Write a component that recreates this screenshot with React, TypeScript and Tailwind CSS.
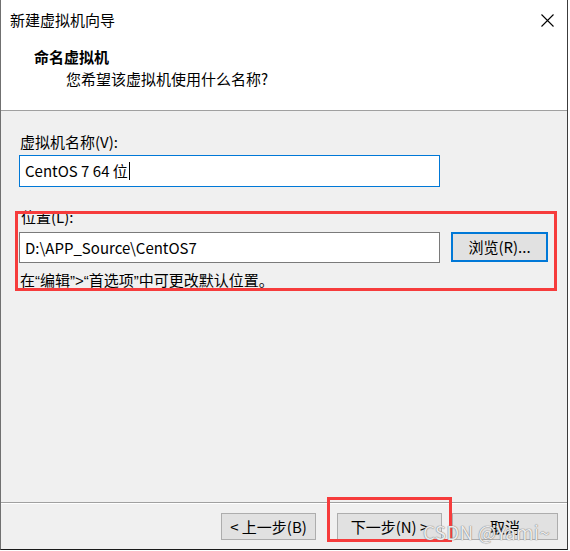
import React from 'react';

const font = "font-['Noto_Sans_CJK_SC','Noto_Sans',sans-serif]";

const WinButton = ({ label, className = '' }: { label: string; className?: string }) => (
    <div
        className={`h-[27px] flex items-center justify-center bg-[#e1e1e1] border border-[#adadad] text-[15px] leading-[20px] text-black ${className}`}
    >
        {label}
    </div>
);

// narrow western quotes as Windows renders them
const Q = ({ children }: { children: React.ReactNode }) => (
    <span className="font-['Liberation_Sans',sans-serif]">{children}</span>
);

export default function App() {
    return (
        <div className={`relative w-[570px] h-[551px] bg-white overflow-hidden ${font}`}>
            <div className="w-[568px] h-[550px] flex flex-col border-l border-r border-b border-l-[#707070] border-r-[#3c3c3c] border-b-[#1a1a1a]">
                {/* Header */}
                <div className="h-[111px] bg-white border-b border-[#a0a0a0] shrink-0">
                    <div className="flex items-center justify-between pt-[10px] pl-[9px] pr-[13px] h-[30px]">
                        <span className="text-[15px] leading-[20px] text-black">新建虚拟机向导</span>
                        <svg width="13" height="13" viewBox="0 0 13 13" className="text-black">
                            <path d="M0.5 0.5 L12.5 12.5 M12.5 0.5 L0.5 12.5" stroke="currentColor" strokeWidth="1.1" />
                        </svg>
                    </div>
                    <div className="mt-[17px] pl-[33px] text-[15px] leading-[20px] font-bold text-black">命名虚拟机</div>
                    <div className="mt-[2px] pl-[65px] text-[15px] leading-[20px] text-black">您希望该虚拟机使用什么名称?</div>
                </div>

                {/* Body */}
                <div className="h-[391px] bg-[#f0f0f0] pl-[18px] pt-[21px] shrink-0">
                    <div className="pl-[1px] text-[15px] leading-[20px] text-black">虚拟机名称(V):</div>
                    <div className="mt-[3px] w-[421px] h-[32px] bg-white border border-[#0078d7] flex items-center pl-[5px] text-[15px] text-black">
                        <span className="leading-[20px]">CentOS 7 64 位</span>
                        <span className="w-px h-[18px] bg-black ml-[1px]" />
                    </div>

                    <div className="mt-[20px] pl-[2px] text-[15px] leading-[20px] text-black">位置(L):</div>
                    <div className="mt-[5px] flex items-start">
                        <div className="w-[421px] h-[31px] bg-white border border-[#7a7a7a] flex items-center pl-[5px] text-[15px] leading-[20px] text-black">
                            D:\APP_Source\CentOS7
                        </div>
                        <div className="ml-[11px] w-[97px] h-[30px] bg-[#e1e1e1] border-2 border-[#0078d7] flex items-center justify-center text-[15px] leading-[20px] text-black">
                            浏览(R)...
                        </div>
                    </div>
                    <div className="mt-[7px] pl-[1px] text-[15px] leading-[20px] text-black">
                        在<Q>“</Q>编辑<Q>”&gt;“</Q>首选项<Q>”</Q>中可更改默认位置。
                    </div>
                </div>

                {/* Footer */}
                <div className="flex-1 bg-[#f0f0f0] border-t border-[#a0a0a0]">
                    <div className="h-full border-t border-white flex justify-end items-start pt-[9px] pr-[9px]">
                        <WinButton label="< 上一步(B)" className="w-[95px]" />
                        <WinButton label="下一步(N) >" className="w-[105px] ml-[21px]" />
                        <WinButton label="取消" className="w-[106px] ml-[10px]" />
                    </div>
                </div>
            </div>

            {/* annotation boxes */}
            <div className="absolute left-[15px] top-[211px] w-[542px] h-[80px] border-[3px] border-[#f63c3c] pointer-events-none" />
            <div className="absolute left-[327px] top-[497px] w-[125px] h-[45px] border-[3px] border-[#f63c3c] pointer-events-none" />

            {/* watermark */}
            <div className="absolute left-[423px] top-[520px] text-[19px] leading-[24px] tracking-[0.2px] text-white/85 [text-shadow:0_0_1px_#777,0_0_1px_#777] pointer-events-none">
                CSDN @Yami~
            </div>
        </div>
    );
}
